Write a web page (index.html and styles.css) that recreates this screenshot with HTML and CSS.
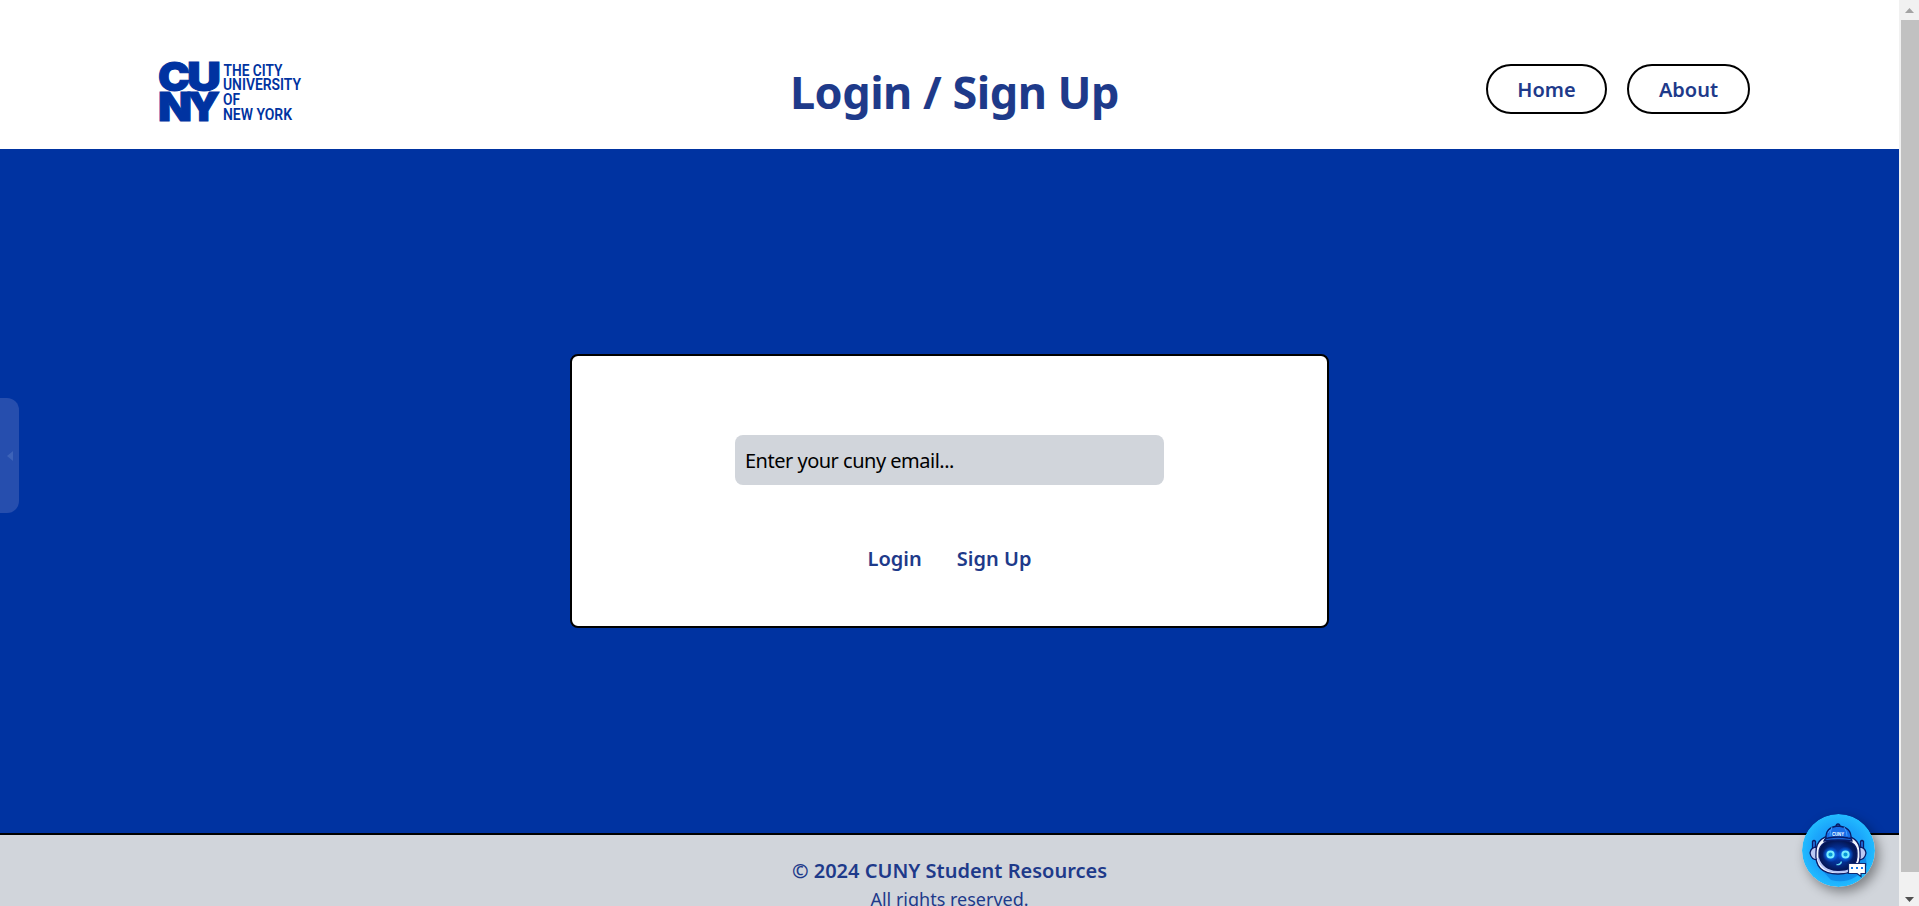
FILE: index.html
```html
<!DOCTYPE html>
<html lang="en">
<head>
<meta charset="utf-8">
<title>Login / Sign Up</title>
<link rel="stylesheet" href="styles.css">
</head>
<body>
<div class="page">
  <header class="header">
    <svg class="logo" viewBox="0 0 144 62" role="img" aria-label="The City University of New York">
      <g class="logo-mark">
        <text x="-1" y="30" font-size="40" textLength="32" lengthAdjust="spacingAndGlyphs">C</text>
        <text x="28" y="30" font-size="40" textLength="34" lengthAdjust="spacingAndGlyphs">U</text>
        <text x="-1" y="59.5" font-size="40" textLength="34" lengthAdjust="spacingAndGlyphs">N</text>
        <text x="28" y="59.5" font-size="40" textLength="33" lengthAdjust="spacingAndGlyphs">Y</text>
      </g>
      <g class="logo-name">
        <text x="64.5" y="14.6" textLength="59" lengthAdjust="spacingAndGlyphs">THE CITY</text>
        <text x="64" y="29.3" textLength="78" lengthAdjust="spacingAndGlyphs">UNIVERSITY</text>
        <text x="64" y="44" textLength="17" lengthAdjust="spacingAndGlyphs">OF</text>
        <text x="64" y="59" textLength="69" lengthAdjust="spacingAndGlyphs">NEW YORK</text>
      </g>
    </svg>
    <h1 class="title">Login / Sign Up</h1>
    <nav class="nav">
      <a class="pill home">Home</a>
      <a class="pill about">About</a>
    </nav>
  </header>
  <main class="main">
    <section class="card">
      <div class="field">Enter your cuny email...</div>
      <div class="actions"><a class="login">Login</a><a class="signup">Sign Up</a></div>
    </section>
  </main>
  <footer class="footer">
    <p class="copyright">© 2024 CUNY Student Resources</p>
    <p class="rights">All rights reserved.</p>
  </footer>
</div>
<div class="scrollbar">
  <svg class="arrow" viewBox="0 0 20 20"><path d="M10.5 8 15 13H6z" fill="#a3a3a3"/></svg>
  <div class="thumb"></div>
  <svg class="arrow arrow-down" viewBox="0 0 20 34"><path d="M6 25h9l-4.5 5z" fill="#505050"/></svg>
</div>
<div class="side-tab"><svg viewBox="0 0 6 10"><path d="M6 0v10L0 5z" fill="#3d63b9"/></svg></div>
<svg class="bot" viewBox="0 0 73 73">
  <defs>
    <radialGradient id="sky"><stop offset="0" stop-color="#168cf2"/><stop offset=".7" stop-color="#1ba5fb"/><stop offset="1" stop-color="#22bcff"/></radialGradient>
    <radialGradient id="face"><stop offset="0" stop-color="#0648c4"/><stop offset=".6" stop-color="#042a88"/><stop offset="1" stop-color="#041552"/></radialGradient>
    <radialGradient id="glow"><stop offset="0" stop-color="#12b6ff"/><stop offset=".5" stop-color="#0a84ff" stop-opacity=".7"/><stop offset="1" stop-color="#0a64ff" stop-opacity="0"/></radialGradient>
  </defs>
  <circle cx="36.5" cy="36.5" r="36.5" fill="url(#sky)"/>
  <path d="M17 53 29 66q22 6 36-15L62 35z" fill="#0878dd" opacity=".6"/>
  <g stroke="#0a1b66" stroke-width="1.3">
    <path d="M10.5 36V27.500q1.500-2 3 0V36zM58.500 36V27.500q1.500-2 3 0V36z" fill="#246fe0"/>
    <path d="M15 33q-6 0-7 6 1 7 8 7zM57 33q6 0 7 6-1 7-8 7z" fill="#bcc9f3"/>
    <path d="M14 38q0-17 22-17t22 17q2 22-22 22T14 38z" fill="#f1f4ff"/>
    <path d="M17 39q0-13 19-13t19 13q1 18-19 18T17 39z" fill="url(#face)"/>
  </g>
  <path d="M16 44q4 13 19 14 15 1 20-9" fill="none" stroke="#b7c5f7" stroke-width="2"/>
  <circle cx="28.500" cy="40.500" r="8" fill="url(#glow)"/><circle cx="43.500" cy="40.500" r="8" fill="url(#glow)"/>
  <circle cx="28.500" cy="40.500" r="3.100" fill="#079ad8" stroke="#79eeff" stroke-width="2"/>
  <circle cx="43.500" cy="40.500" r="3.100" fill="#079ad8" stroke="#79eeff" stroke-width="2"/>
  <path d="M34.500 50.500q4 1 5-3" fill="none" stroke="#62d9f4" stroke-width="1.300"/>
  <g stroke="#071b66" stroke-width="1.300">
    <path d="M34 13q0-3 2-3t2 3z" fill="#2d83ef"/>
    <path d="M24 25q-1-12 12-13 14 1 13 13z" fill="#176de7"/>
    <path d="M22 27q1-3 4-3 10-2 20 0 4 0 4 3-13-2-28 0z" fill="#1c65d7"/>
  </g>
  <path d="M26 19l2-3M30 13q-2 4-2 9M42 13q3 4 3 9" fill="none" stroke="#48a6ff" stroke-width=".9"/>
  <text class="cap-text" x="30" y="21.500" textLength="12" lengthAdjust="spacingAndGlyphs">CUNY</text>
  <path d="M46.500 49.500h17v10H59v3l-4-3h-8.500z" fill="#fff" stroke="#12296f" stroke-width="1.200"/>
  <path d="M49 53h2v2h-2zM54 53h2v2h-2zM59 53h2v2h-2z" fill="#1678ec"/>
</svg>
</body>
</html>
```
FILE: styles.css
```css
* { box-sizing: border-box; }
body {
  margin: 0;
  width: 1919px;
  height: 906px;
  overflow: hidden;
  display: flex;
  background: #fff;
  color: #1e3a8a;
  font-family: "Noto Sans", "Open Sans", sans-serif;
}
h1, p { margin: 0; }
.page { width: 1899px; height: 906px; display: flex; flex-direction: column; overflow: hidden; }
.header {
  height: 149px;
  flex: none;
  padding: 0 149px 0 159px;
  display: grid;
  grid-template-columns: 1fr auto 1fr;
  align-items: center;
}
.logo { width: 144px; height: 62px; margin-top: 34px; overflow: visible; fill: #0033a1; }
.logo-mark { font-family: Inter, "Liberation Sans", sans-serif; font-weight: 900; stroke: #0033a1; stroke-width: 1; }
.logo-name { font-family: Roboto, "Liberation Sans", sans-serif; font-weight: 600; font-size: 17.3px; }
.title { font-size: 45px; line-height: 60px; font-weight: 700; margin-top: 34px; white-space: nowrap; letter-spacing: -.5px; }
.nav { display: flex; gap: 20px; justify-content: flex-end; margin-top: 29px; }
.pill {
  height: 50px;
  border: 2px solid #000;
  border-radius: 25px;
  display: flex;
  align-items: center;
  justify-content: center;
  font-size: 20px;
  font-weight: 600;
}
.home { width: 121px; }
.about { width: 123px; }
.main { height: 684px; flex: none; background: #0033a1; display: flex; justify-content: center; align-items: center; }
.card {
  width: 759px;
  height: 274px;
  border: 2px solid #000;
  border-radius: 8px;
  background: #fff;
  display: flex;
  flex-direction: column;
  align-items: center;
  padding-top: 79px;
}
.field {
  width: 429px;
  height: 50px;
  border-radius: 8px;
  background: #d1d5db;
  color: #000;
  font-size: 20px;
  line-height: 50px;
  padding: 1px 10px;
  letter-spacing: -.5px;
}
.actions { display: flex; gap: 35px; margin-top: 60px; font-size: 20px; line-height: 28px; font-weight: 600; }
.footer { height: 73px; flex: none; border-top: 2px solid #000; background: #d1d5db; text-align: center; padding-top: 22px; }
.copyright { font-size: 20px; line-height: 28px; font-weight: 600; }
.rights { font-size: 18px; line-height: 28px; }
.scrollbar { width: 20px; height: 906px; background: #f1f1f1; display: flex; flex-direction: column; }
.arrow { width: 20px; height: 20px; flex: none; }
.thumb { height: 852px; margin-left: 2px; background: #c1c1c1; }
.arrow-down { height: 34px; }
.side-tab {
  position: absolute;
  left: 0;
  top: 398px;
  width: 19px;
  height: 115px;
  border-radius: 0 12px 12px 0;
  background: #264eae;
  display: flex;
  align-items: center;
  justify-content: flex-end;
  padding-right: 6px;
}
.side-tab svg { width: 6px; height: 10px; }
.bot {
  position: absolute;
  left: 1802px;
  top: 814px;
  width: 73px;
  height: 73px;
  border-radius: 50%;
  box-shadow: 4px 5px 12px rgba(0, 0, 0, .4);
}
.cap-text { fill: #fff; font: 700 5.5px "Liberation Sans", sans-serif; }
```
